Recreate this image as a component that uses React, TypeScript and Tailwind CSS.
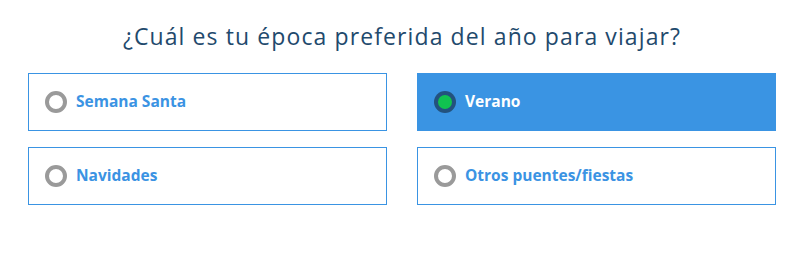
import React, { useState } from 'react';

const options = ['Semana Santa', 'Verano', 'Navidades', 'Otros puentes/fiestas'];

export default function App() {
  const [selected, setSelected] = useState('Verano');

  return (
    <main className="w-[804px] h-[262px] bg-white font-['Open_Sans','Lato',sans-serif]">
      {/* Pregunta */}
      <h1 className="pt-[20px] pb-[21px] text-center text-[23px] leading-[32px] tracking-[1.1px] text-[#1f4a6d]">
        ¿Cuál es tu época preferida del año para viajar?
      </h1>

      {/* Opciones */}
      <div className="px-[28px] grid grid-cols-2 gap-x-[30px] gap-y-[16px]">
        {options.map((opt) => {
          const active = selected === opt;
          return (
            <button
              key={opt}
              onClick={() => setSelected(opt)}
              className={`h-[58px] flex items-center gap-[9px] pl-[16px] text-left border ${
                active ? 'bg-[#3a94e3] border-[#3a94e3]' : 'bg-white border-[#3a94e3]'
              }`}
            >
              {active ? (
                <span className="w-[22px] h-[22px] rounded-full bg-[#23527e] flex items-center justify-center">
                  <span className="w-[14px] h-[14px] rounded-full bg-[#10c350]" />
                </span>
              ) : (
                <span className="w-[22px] h-[22px] rounded-full border-[4px] border-[#9a9a9a] bg-white" />
              )}
              <span
                className={`text-[15.5px] font-bold ${
                  active ? 'text-white' : 'text-[#3b93e3]'
                }`}
              >
                {opt}
              </span>
            </button>
          );
        })}
      </div>
    </main>
  );
}
